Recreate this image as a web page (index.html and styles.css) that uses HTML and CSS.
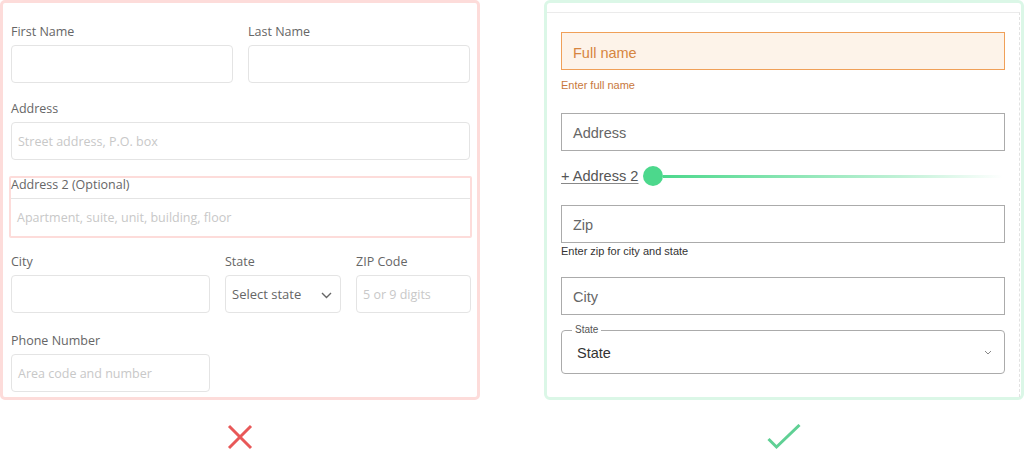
FILE: index.html
```html
<!DOCTYPE html>
<html>
<head>
<meta charset="utf-8">
<link rel="stylesheet" href="styles.css">
</head>
<body>
<div class="page">
  <div class="panels">
    <section class="panel bad">
      <div class="row two">
        <div class="field"><div class="lbl">First Name</div><div class="inp"></div></div>
        <div class="field"><div class="lbl">Last Name</div><div class="inp"></div></div>
      </div>
      <div class="row r2">
        <div class="field"><div class="lbl">Address</div><div class="inp ph">Street address, P.O. box</div></div>
      </div>
      <div class="row hl">
        <div class="field"><div class="lbl tight">Address 2 (Optional)</div><div class="inp ph">Apartment, suite, unit, building, floor</div></div>
      </div>
      <div class="row three">
        <div class="field"><div class="lbl">City</div><div class="inp"></div></div>
        <div class="field"><div class="lbl">State</div><div class="inp sel">Select state
          <svg class="chev" width="11" height="7" viewBox="0 0 11 7"><polyline points="1,1 5.5,5.5 10,1" fill="none" stroke="#666" stroke-width="1.4"/></svg></div></div>
        <div class="field"><div class="lbl">ZIP Code</div><div class="inp ph">5 or 9 digits</div></div>
      </div>
      <div class="row r5">
        <div class="field phone"><div class="lbl">Phone Number</div><div class="inp ph">Area code and number</div></div>
      </div>
    </section>
    <section class="panel good">
      <div class="inner">
        <div class="box err">Full name</div>
        <div class="help err-help">Enter full name</div>
        <div class="box addr">Address</div>
        <div class="add2row">
          <span class="add2">+ Address 2</span>
          <span class="dot"></span>
          <span class="trail"></span>
        </div>
        <div class="box zip">Zip</div>
        <div class="help zip-help">Enter zip for city and state</div>
        <div class="box city">City</div>
        <div class="selbox">
          <span class="legend">State</span>
          <span class="selval">State</span>
          <svg class="chev2" width="8" height="5" viewBox="0 0 8 5"><polyline points="1,1 4,4 7,1" fill="none" stroke="#888" stroke-width="1"/></svg>
        </div>
      </div>
    </section>
  </div>
  <div class="marks">
    <div class="mark">
      <svg width="26" height="26" viewBox="0 0 26 26"><line x1="2" y1="2" x2="24" y2="24" stroke="#e85858" stroke-width="3"/><line x1="24" y1="2" x2="2" y2="24" stroke="#e85858" stroke-width="3"/></svg>
    </div>
    <div class="mark">
      <svg width="34" height="26" viewBox="0 0 34 26"><polyline points="1.5,15 9.5,23 32.5,1" fill="none" stroke="#5fd094" stroke-width="3"/></svg>
    </div>
  </div>
</div>
</body>
</html>
```

FILE: styles.css
```css
html, body { margin: 0; padding: 0; background: #fff; }
.page { width: 1024px; height: 459px; overflow: hidden; }
.panels { display: flex; column-gap: 64px; }
.panel { box-sizing: border-box; width: 480px; height: 400px; }

/* bad panel */
.bad {
  border: 3px solid #fddcda;
  border-radius: 5px;
  padding: 21px 7px 0 8px;
  font-family: "Open Sans", "Liberation Sans", sans-serif;
}
.row.two { display: grid; grid-template-columns: 222px 222px; column-gap: 15px; }
.row.r2 { margin-top: 18px; }
.row.hl { margin: 16px -2px 0; border: 2px solid #fddcda; border-radius: 2px; }
.row.three { margin-top: 16px; display: grid; grid-template-columns: 199px 116px 115px; column-gap: 15px; }
.row.r5 { margin-top: 20px; }
.phone { width: 199px; }
.lbl { font-size: 12.5px; line-height: 16px; color: #666; margin-bottom: 5px; }
.lbl.tight { line-height: 14px; margin-bottom: 6px; }
.inp {
  box-sizing: border-box; height: 38px;
  border: 1px solid #e4e4e4; border-radius: 4px;
  display: flex; align-items: center; padding-left: 6px;
  font-size: 12.5px; color: #c8c8c8;
}
.hl .inp { border-radius: 0; border-left: 0; border-right: 0; border-bottom: 0; }
.inp.sel { color: #666; font-size: 13px; justify-content: space-between; padding-right: 8px; }
.chev { margin-top: 2px; }

/* good panel */
.good {
  border: 3px solid #dbf7e7;
  border-radius: 6px;
  font-family: "Liberation Sans", Arial, sans-serif;
}
.inner {
  box-sizing: border-box;
  height: 385px;
  margin: 9px 1px 0 0;
  border-top: 1px solid #ebebeb;
  border-right: 1px dashed #e2e2e2;
  padding: 19px 14px 0 14px;
}
.box {
  box-sizing: border-box; height: 38px;
  border: 1px solid #ababab;
  display: flex; align-items: center; padding: 2px 0 0 11px;
  font-size: 14.5px; color: #666;
}
.box.err { background: #fdf3e9; border-color: #f0a058; color: #d68540; padding-top: 3px; }
.help { font-size: 11px; line-height: 14px; }
.err-help { margin-top: 8px; color: #c8783c; }
.addr { margin-top: 21px; }
.add2row { margin-top: 15px; height: 20px; display: flex; align-items: center; }
.add2 { font-size: 14.6px; color: #555; text-decoration: underline; text-decoration-color: #888; text-underline-offset: 2px; }
.dot { width: 20px; height: 20px; border-radius: 50%; background: #4cd88c; margin-left: 5px; flex: none; }
.trail { height: 3px; width: 340px; background: linear-gradient(to right, #4cd88c, rgba(76,216,140,0.35) 70%, rgba(76,216,140,0)); }
.zip { margin-top: 19px; }
.zip-help { margin-top: 1px; color: #333; }
.city { margin-top: 19px; }
.selbox {
  position: relative;
  box-sizing: border-box; height: 44px; margin-top: 15px;
  border: 1px solid #ababab; border-radius: 4px;
  display: flex; align-items: center; justify-content: space-between;
  padding: 1px 12px 0 15px;
}
.legend {
  position: absolute; left: 10px; top: -7px;
  background: #fff; padding: 0 3px;
  font-size: 10px; line-height: 12px; color: #555;
}
.selval { font-size: 14.5px; color: #333; }

/* marks */
.marks { display: flex; column-gap: 64px; margin-top: 24px; }
.mark { width: 480px; display: flex; justify-content: center; }
.mark:last-child { justify-content: flex-start; padding-left: 223px; box-sizing: border-box; }
```
